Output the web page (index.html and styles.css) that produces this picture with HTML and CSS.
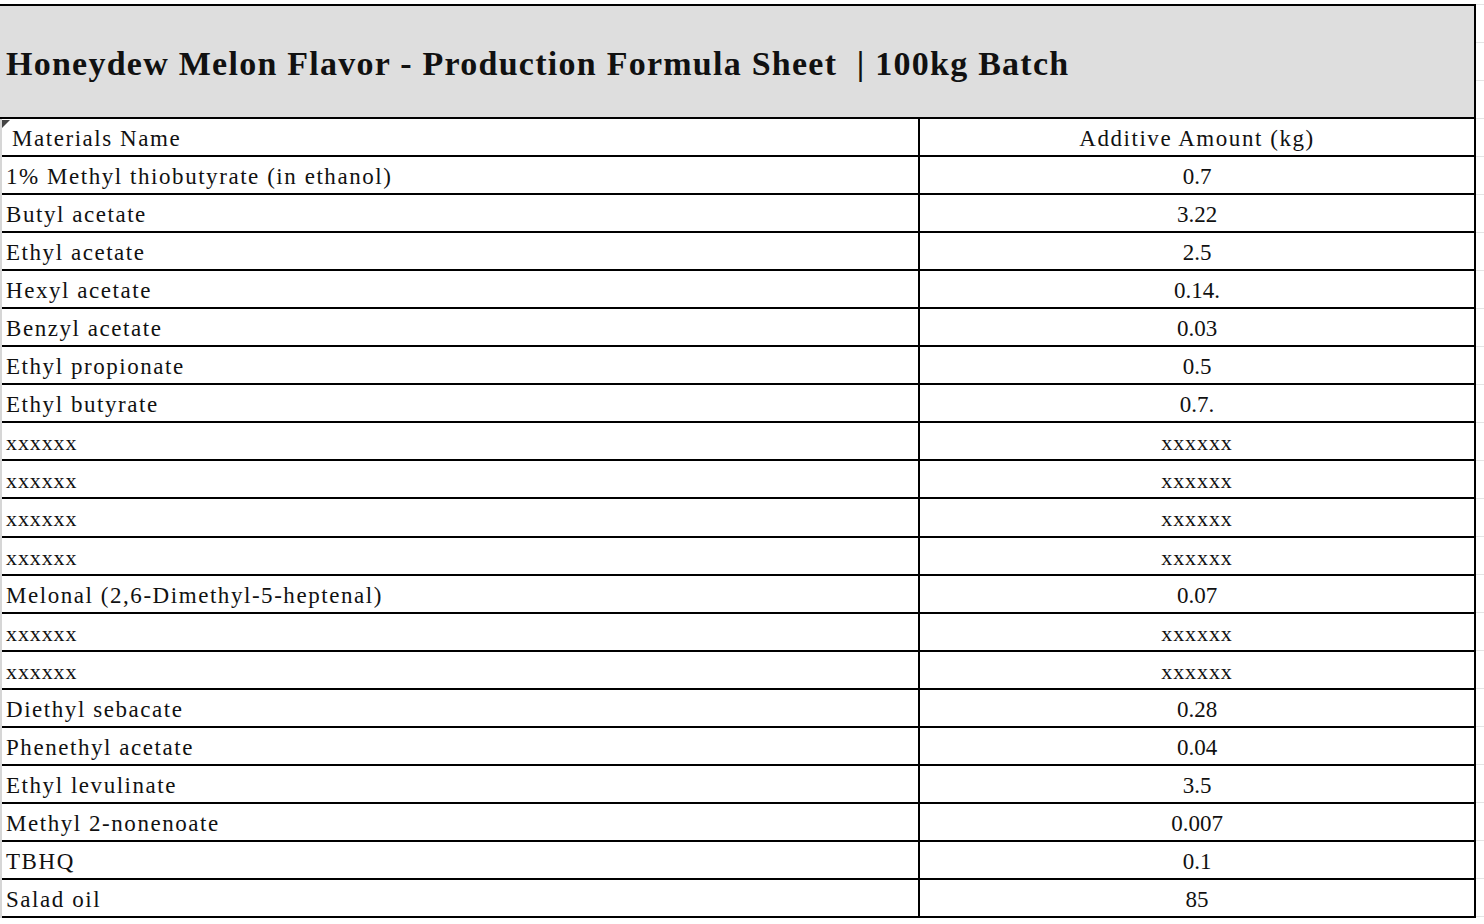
FILE: index.html
```html
<!DOCTYPE html>
<html lang="en">
<head>
<meta charset="utf-8">
<title>Honeydew Melon Flavor - Production Formula Sheet</title>
<link rel="stylesheet" href="styles.css">
</head>
<body>
<div class="page">
  <div class="sheet">
    <div class="title">Honeydew Melon Flavor - Production Formula Sheet &nbsp;| 100kg Batch</div>
    <div class="grid">
      <div class="row head"><div class="name">Materials Name</div><div class="amt">Additive Amount (kg)</div></div>
      <div class="row"><div class="name">1% Methyl thiobutyrate (in ethanol)</div><div class="amt">0.7</div></div>
      <div class="row"><div class="name">Butyl acetate</div><div class="amt">3.22</div></div>
      <div class="row"><div class="name">Ethyl acetate</div><div class="amt">2.5</div></div>
      <div class="row"><div class="name">Hexyl acetate</div><div class="amt">0.14.</div></div>
      <div class="row"><div class="name">Benzyl acetate</div><div class="amt">0.03</div></div>
      <div class="row"><div class="name">Ethyl propionate</div><div class="amt">0.5</div></div>
      <div class="row"><div class="name">Ethyl butyrate</div><div class="amt">0.7.</div></div>
      <div class="row masked"><div class="name">xxxxxx</div><div class="amt">xxxxxx</div></div>
      <div class="row masked"><div class="name">xxxxxx</div><div class="amt">xxxxxx</div></div>
      <div class="row masked"><div class="name">xxxxxx</div><div class="amt">xxxxxx</div></div>
      <div class="row masked"><div class="name">xxxxxx</div><div class="amt">xxxxxx</div></div>
      <div class="row"><div class="name">Melonal (2,6-Dimethyl-5-heptenal)</div><div class="amt">0.07</div></div>
      <div class="row masked"><div class="name">xxxxxx</div><div class="amt">xxxxxx</div></div>
      <div class="row masked"><div class="name">xxxxxx</div><div class="amt">xxxxxx</div></div>
      <div class="row"><div class="name">Diethyl sebacate</div><div class="amt">0.28</div></div>
      <div class="row"><div class="name">Phenethyl acetate</div><div class="amt">0.04</div></div>
      <div class="row"><div class="name">Ethyl levulinate</div><div class="amt">3.5</div></div>
      <div class="row"><div class="name">Methyl 2-nonenoate</div><div class="amt">0.007</div></div>
      <div class="row"><div class="name">TBHQ</div><div class="amt">0.1</div></div>
      <div class="row"><div class="name">Salad oil</div><div class="amt">85</div></div>
    </div>
  </div>
  <div class="gutter"></div>
</div>
</body>
</html>
```

FILE: styles.css
```css
html, body {
  margin: 0;
  padding: 0;
  background: #ffffff;
}

body {
  font-family: "Liberation Serif", "Times New Roman", serif;
  color: #111111;
}

.page {
  display: flex;
  padding-top: 4px;
}

.sheet {
  width: 1476px;
  flex: none;
  border-top: 2px solid #000;
  border-right: 2px solid #000;
  box-sizing: border-box;
}

.gutter {
  flex: 1;
  background: repeating-linear-gradient(to bottom, #e4e4e4 0 1px, transparent 1px 38px);
}

.title {
  height: 113px;
  box-sizing: border-box;
  background: #dedede;
  border-bottom: 2px solid #000;
  display: flex;
  align-items: center;
  padding-left: 6px;
  padding-top: 4px;
  font-weight: bold;
  font-size: 34px;
  letter-spacing: 1.25px;
  white-space: nowrap;
}

.grid {
  display: flex;
  flex-direction: column;
  border-left: 2px solid #d6d6d6;
}

.row {
  display: grid;
  grid-template-columns: 918px 1fr;
  height: 38.05px;
  border-bottom: 2px solid #000;
  box-sizing: border-box;
  font-size: 23px;
  letter-spacing: 1.55px;
  line-height: 36px;
}

.row .name {
  border-right: 2px solid #000;
  padding-left: 4px;
  padding-top: 2px;
  white-space: nowrap;
  overflow: hidden;
}

.row .amt {
  text-align: center;
  padding-top: 2px;
  white-space: nowrap;
  letter-spacing: 0;
}

.row.head .amt {
  letter-spacing: 1.55px;
}

.row.head .name {
  padding-left: 10px;
  position: relative;
}

.row.head .name::before {
  content: "";
  position: absolute;
  left: 0;
  top: 1px;
  width: 0;
  height: 0;
  border-top: 8px solid #444;
  border-right: 8px solid transparent;
}

.row.masked {
  font-size: 22px;
  letter-spacing: 0.9px;
}

.row.masked .amt {
  letter-spacing: 0.9px;
}
```
